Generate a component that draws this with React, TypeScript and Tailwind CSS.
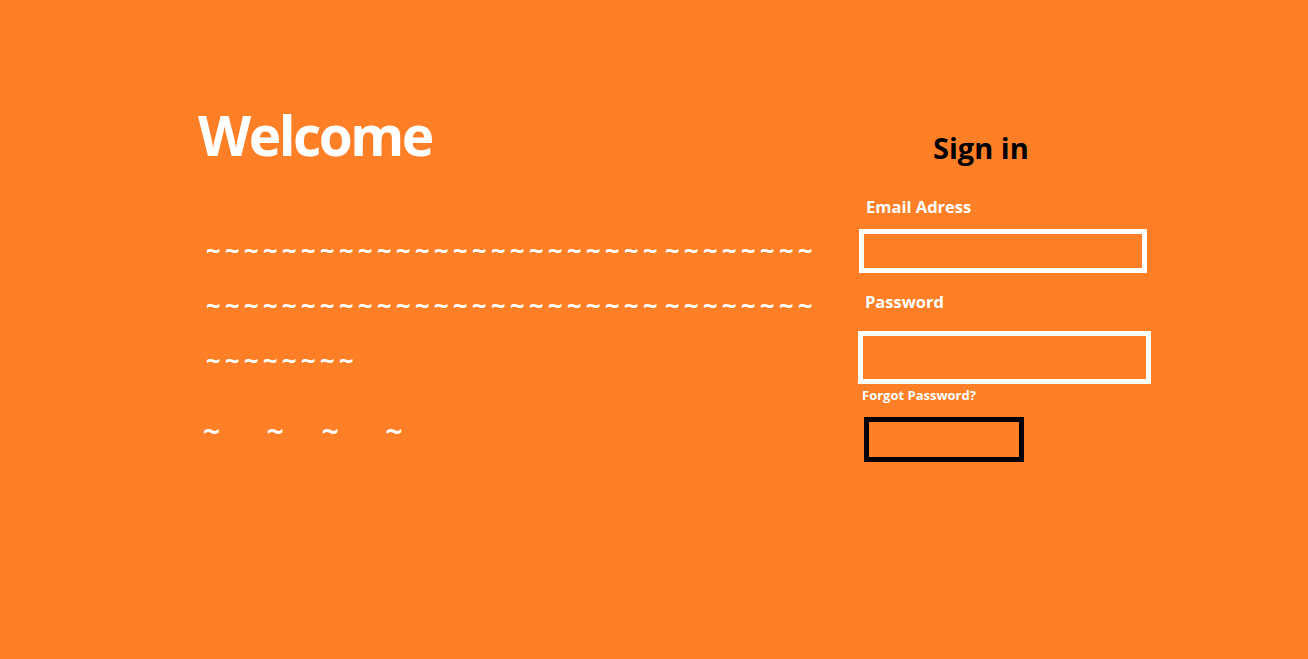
import React from "react";

export default function App() {
  const row = "~~~~~~~~~~~~~~~~~~~~~~~~";
  const row2 = "~~~~~~~~";
  return (
    <div className="min-h-[659px] w-full bg-[#ff7f27] flex font-['Open_Sans','Noto_Sans',sans-serif]">
      <div className="ml-[198px] pt-[100px] w-[640px] flex flex-col">
        <h1 className="text-[55px] leading-[70px] font-bold text-white tracking-[-2.5px]">Welcome</h1>
        <div className="mt-[69px] ml-[8px] flex flex-col gap-[31px] text-white font-bold text-[24px] leading-[24px] font-['DejaVu_Sans_Mono',monospace]">
          <div className="flex whitespace-pre tracking-[4.55px]">
            <span>{row}</span>
            <span className="ml-[3px]">{row2}</span>
          </div>
          <div className="flex whitespace-pre tracking-[4.55px]">
            <span>{row}</span>
            <span className="ml-[3px]">{row2}</span>
          </div>
          <div className="whitespace-pre tracking-[4.55px]">{row2}</div>
          <div className="flex mt-[15px] -ml-[3px] text-[28px]">
            <span>~</span>
            <span className="ml-[47px]">~</span>
            <span className="ml-[38px]">~</span>
            <span className="ml-[47px]">~</span>
          </div>
        </div>
      </div>
      <div className="ml-[20px] pt-[128px] w-[300px] flex flex-col">
        <h2 className="ml-[75px] text-[29px] leading-[40px] font-bold text-black">Sign in</h2>
        <label className="mt-[28px] ml-[8px] text-[16.5px] leading-[22px] font-bold text-white">Email Adress</label>
        <div className="mt-[11px] ml-[1px] w-[288px] h-[44px] border-[5px] border-white" />
        <label className="mt-[18px] ml-[7px] text-[16.5px] leading-[22px] font-bold text-white">Password</label>
        <div className="mt-[18px] w-[293px] h-[53px] border-[5px] border-white" />
        <span className="mt-[3px] ml-[4px] text-[13px] leading-[16px] font-bold text-white">Forgot Password?</span>
        <div className="mt-[14px] ml-[6px] w-[160px] h-[45px] border-[5px] border-black" />
      </div>
    </div>
  );
}
